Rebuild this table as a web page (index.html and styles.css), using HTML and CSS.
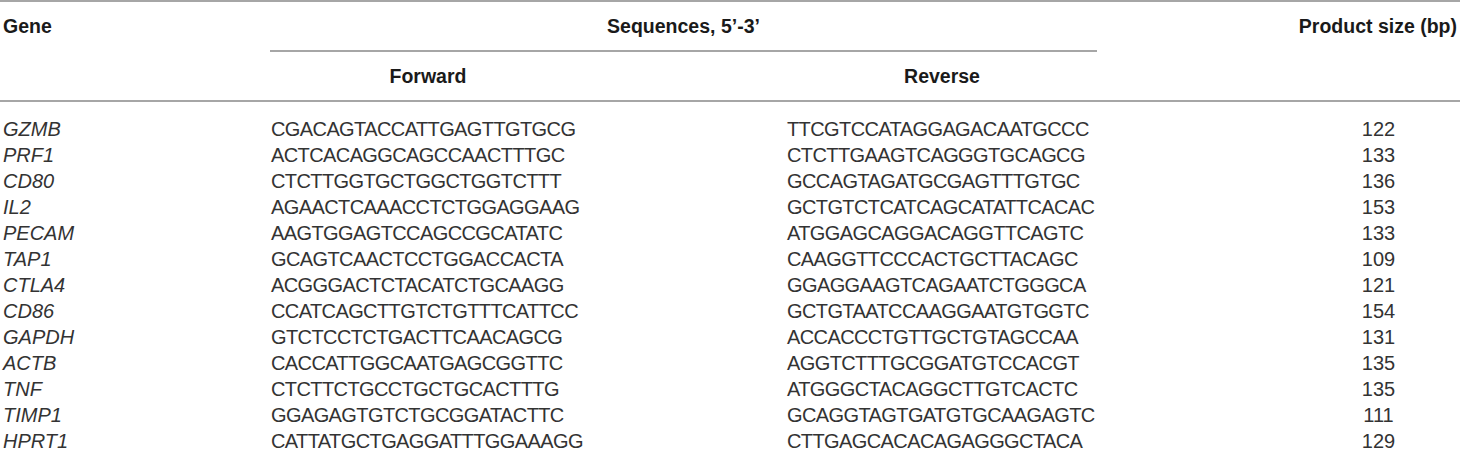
FILE: index.html
```html
<!DOCTYPE html>
<html lang="en">
<head>
<meta charset="utf-8">
<title>Primer sequences</title>
<link rel="stylesheet" href="styles.css">
</head>
<body>
<div class="tbl">
  <div class="thead">
    <div class="hrow hrow-top">
      <div class="hc c-gene">Gene</div>
      <div class="hc c-seq">Sequences, 5’-3’</div>
      <div class="hc c-spacer"></div>
      <div class="hc c-prod">Product size (bp)</div>
    </div>
    <div class="hrow hrow-sub">
      <div class="hc c-gene"></div>
      <div class="hc c-fwd">Forward</div>
      <div class="hc c-gap"></div>
      <div class="hc c-rev">Reverse</div>
      <div class="hc c-spacer"></div>
      <div class="hc c-prod"></div>
    </div>
  </div>
  <div class="tbody">
    <div class="row"><div class="c-gene gname">GZMB</div><div class="c-fwd">CGACAGTACCATTGAGTTGTGCG</div><div class="c-gap"></div><div class="c-rev">TTCGTCCATAGGAGACAATGCCC</div><div class="c-spacer"></div><div class="c-prod">122</div></div>
    <div class="row"><div class="c-gene gname">PRF1</div><div class="c-fwd">ACTCACAGGCAGCCAACTTTGC</div><div class="c-gap"></div><div class="c-rev">CTCTTGAAGTCAGGGTGCAGCG</div><div class="c-spacer"></div><div class="c-prod">133</div></div>
    <div class="row"><div class="c-gene gname">CD80</div><div class="c-fwd">CTCTTGGTGCTGGCTGGTCTTT</div><div class="c-gap"></div><div class="c-rev">GCCAGTAGATGCGAGTTTGTGC</div><div class="c-spacer"></div><div class="c-prod">136</div></div>
    <div class="row"><div class="c-gene gname">IL2</div><div class="c-fwd">AGAACTCAAACCTCTGGAGGAAG</div><div class="c-gap"></div><div class="c-rev">GCTGTCTCATCAGCATATTCACAC</div><div class="c-spacer"></div><div class="c-prod">153</div></div>
    <div class="row"><div class="c-gene gname">PECAM</div><div class="c-fwd">AAGTGGAGTCCAGCCGCATATC</div><div class="c-gap"></div><div class="c-rev">ATGGAGCAGGACAGGTTCAGTC</div><div class="c-spacer"></div><div class="c-prod">133</div></div>
    <div class="row"><div class="c-gene gname">TAP1</div><div class="c-fwd">GCAGTCAACTCCTGGACCACTA</div><div class="c-gap"></div><div class="c-rev">CAAGGTTCCCACTGCTTACAGC</div><div class="c-spacer"></div><div class="c-prod">109</div></div>
    <div class="row"><div class="c-gene gname">CTLA4</div><div class="c-fwd">ACGGGACTCTACATCTGCAAGG</div><div class="c-gap"></div><div class="c-rev">GGAGGAAGTCAGAATCTGGGCA</div><div class="c-spacer"></div><div class="c-prod">121</div></div>
    <div class="row"><div class="c-gene gname">CD86</div><div class="c-fwd">CCATCAGCTTGTCTGTTTCATTCC</div><div class="c-gap"></div><div class="c-rev">GCTGTAATCCAAGGAATGTGGTC</div><div class="c-spacer"></div><div class="c-prod">154</div></div>
    <div class="row"><div class="c-gene gname">GAPDH</div><div class="c-fwd">GTCTCCTCTGACTTCAACAGCG</div><div class="c-gap"></div><div class="c-rev">ACCACCCTGTTGCTGTAGCCAA</div><div class="c-spacer"></div><div class="c-prod">131</div></div>
    <div class="row"><div class="c-gene gname">ACTB</div><div class="c-fwd">CACCATTGGCAATGAGCGGTTC</div><div class="c-gap"></div><div class="c-rev">AGGTCTTTGCGGATGTCCACGT</div><div class="c-spacer"></div><div class="c-prod">135</div></div>
    <div class="row"><div class="c-gene gname">TNF</div><div class="c-fwd">CTCTTCTGCCTGCTGCACTTTG</div><div class="c-gap"></div><div class="c-rev">ATGGGCTACAGGCTTGTCACTC</div><div class="c-spacer"></div><div class="c-prod">135</div></div>
    <div class="row"><div class="c-gene gname">TIMP1</div><div class="c-fwd">GGAGAGTGTCTGCGGATACTTC</div><div class="c-gap"></div><div class="c-rev">GCAGGTAGTGATGTGCAAGAGTC</div><div class="c-spacer"></div><div class="c-prod">111</div></div>
    <div class="row"><div class="c-gene gname">HPRT1</div><div class="c-fwd">CATTATGCTGAGGATTTGGAAAGG</div><div class="c-gap"></div><div class="c-rev">CTTGAGCACACAGAGGGCTACA</div><div class="c-spacer"></div><div class="c-prod">129</div></div>
  </div>
</div>
</body>
</html>
```

FILE: styles.css
```css
html, body {
  margin: 0;
  padding: 0;
  background: #ffffff;
}

body {
  width: 1460px;
  height: 463px;
  overflow: hidden;
  font-family: "Liberation Sans", Arial, sans-serif;
  font-size: 20px;
  color: #333333;
}

.tbl {
  border-top: 2px solid #a6a6a6;
}

.thead {
  border-bottom: 2px solid #a6a6a6;
}

.hrow,
.row {
  display: grid;
  grid-template-columns: 270px 316px 201px 310px 1fr 163px;
}

.hc {
  font-size: 19.5px;
  font-weight: bold;
  color: #1a1a1a;
  display: flex;
  align-items: center;
}

.hrow-top {
  height: 50px;
}

.hrow-top .hc {
  border-bottom: 2px solid transparent;
}

.hrow-top .c-seq {
  grid-column: 2 / 5;
  justify-content: center;
  border-bottom-color: #a6a6a6;
}

.hrow-sub {
  height: 48px;
}

.c-gene {
  padding-left: 3px;
}

.c-fwd {
  padding-left: 1px;
}

.hrow-sub .c-fwd,
.hrow-sub .c-rev {
  justify-content: center;
  padding-left: 0;
}

.hrow .c-prod {
  justify-content: flex-end;
  padding-right: 3px;
}

.tbody {
  padding: 14px 0 9px;
}

.row {
  height: 26px;
  line-height: 26px;
}

.row .c-fwd,
.row .c-rev {
  letter-spacing: -0.6px;
}

.gname {
  font-style: italic;
}

.row .c-prod {
  text-align: center;
}
```
